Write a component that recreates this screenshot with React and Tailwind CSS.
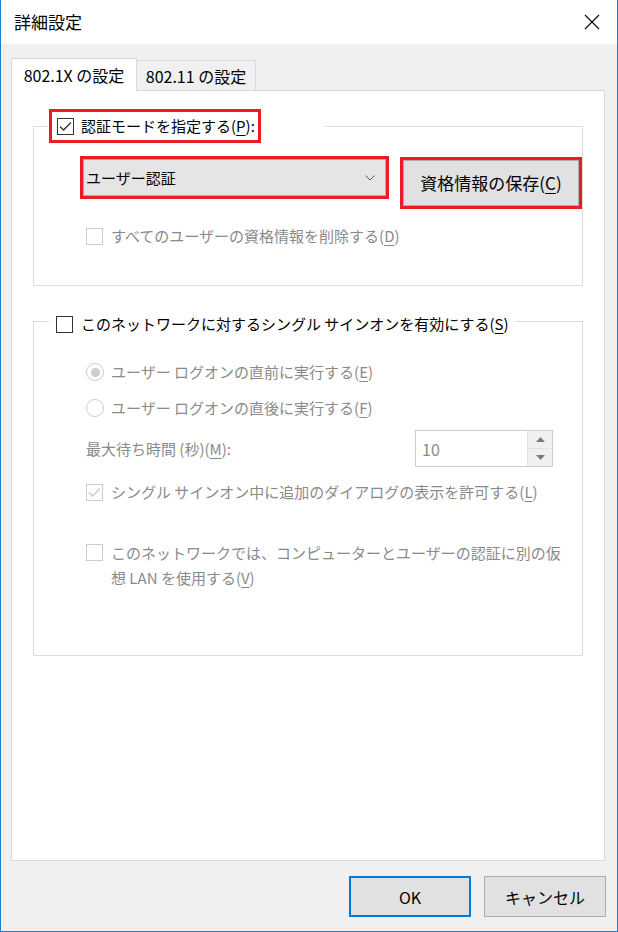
const DIS = "text-[#8a8a8a]";

function CheckBox({ checked, disabled }) {
  return (
    <span
      className={`w-[17px] h-[17px] shrink-0 border bg-white flex items-center justify-center ${
        disabled ? "border-[#cccccc]" : "border-[#333333]"
      }`}
    >
      {checked && (
        <svg width="13" height="11" viewBox="0 0 13 11" fill="none">
          <path d="M1 5.5L4.5 9L12 1.5" stroke={disabled ? "#c8c8c8" : "#333333"} strokeWidth="1.3" />
        </svg>
      )}
    </span>
  );
}

function Radio({ checked }) {
  return (
    <span className="w-[18px] h-[18px] shrink-0 rounded-full border border-[#cccccc] bg-white flex items-center justify-center">
      {checked && <span className="w-[9px] h-[9px] rounded-full bg-[#cccccc]" />}
    </span>
  );
}

const U = ({ children }) => <span className="underline underline-offset-[3px]">{children}</span>;

export default function App() {
  return (
    <div className="w-[618px] h-[932px] bg-[#f0f0f0] border-x border-b border-[#1b80d5] flex flex-col font-['Noto_Sans_CJK_JP',sans-serif] text-[15px] text-black">
      {/* title bar */}
      <div className="h-[44px] shrink-0 bg-white flex items-center justify-between pl-[13px] pr-[17px]">
        <span className="text-[17px] leading-[24px]">詳細設定</span>
        <svg width="16" height="16" viewBox="0 0 16 16" fill="none">
          <path d="M1 1L15 15M15 1L1 15" stroke="#000" strokeWidth="1.1" />
        </svg>
      </div>

      <div className="flex flex-col pl-[10px] pt-[14px]">
        {/* tabs */}
        <div className="flex items-end h-[32px] text-[16px]">
          <div className="w-[126px] h-[33px] -mb-px z-10 bg-white border border-b-0 border-[#d9d9d9] flex items-center justify-center leading-[24px]">
            802.1X の設定
          </div>
          <div className="w-[119px] h-[30px] bg-[#f0f0f0] border border-l-0 border-b-0 border-[#d9d9d9] flex items-center justify-center leading-[24px]">
            802.11 の設定
          </div>
        </div>

        {/* panel */}
        <div className="w-[594px] h-[771px] bg-white border border-[#d9d9d9] flex flex-col">
          {/* group 1 */}
          <fieldset className="ml-[21px] mt-[18px] w-[550px] min-w-0 border border-[#dcdcdc] pl-[15px] pb-[38px]">
            <legend className="w-[276px]">
              <div className="w-[212px] h-[34px] border-[3px] border-[#ec1c24] flex items-center pl-[5px] gap-[7px] leading-[24px]">
                <CheckBox checked />
                <span>
                  認証モードを指定する(<U>P</U>):
                </span>
              </div>
            </legend>

            <div className="flex items-start mt-[13px] ml-[31px]">
              <div className="w-[309px] h-[43px] border-[3px] border-[#ec1c24] flex">
                <div className="flex-1 bg-[#e5e5e5] border border-[#adadad] flex items-center justify-between pl-[2px] pr-[10px] leading-[24px]">
                  <span>ユーザー認証</span>
                  <svg width="10" height="6" viewBox="0 0 10 6" fill="none">
                    <path d="M0.5 0.5L5 5L9.5 0.5" stroke="#555" strokeWidth="1" />
                  </svg>
                </div>
              </div>
              <div className="ml-[11px] mt-[1px] w-[182px] h-[52px] border-[3px] border-[#ec1c24] flex">
                <div className="flex-1 bg-[#e1e1e1] border border-[#adadad] flex items-center justify-center text-[17px] leading-[24px]">
                  資格情報の保存(<U>C</U>)
                </div>
              </div>
            </div>

            <div className={`flex items-center gap-[8px] h-[22px] mt-[16px] ml-[37px] leading-[22px] ${DIS}`}>
              <CheckBox disabled />
              <span>
                すべてのユーザーの資格情報を削除する(<U>D</U>)
              </span>
            </div>
          </fieldset>

          {/* group 2 */}
          <fieldset className="ml-[21px] mt-[20px] w-[550px] min-w-0 border border-[#dcdcdc] pl-[15px] pb-[65px]">
            <legend className="w-[466px]">
              <div className="h-[30px] pt-[6px] pl-[7px] flex items-center gap-[8px] leading-[24px]">
                <CheckBox />
                <span className="whitespace-nowrap">
                  このネットワークに対するシングル サインオンを有効にする(<U>S</U>)
                </span>
              </div>
            </legend>

            <div className={`flex flex-col ml-[37px] ${DIS}`}>
              <div className="flex items-center gap-[7px] h-[24px] mt-[24px] leading-[24px]">
                <Radio checked />
                <span>
                  ユーザー ログオンの直前に実行する(<U>E</U>)
                </span>
              </div>
              <div className="flex items-center gap-[7px] h-[24px] mt-[12px] leading-[24px]">
                <Radio />
                <span>
                  ユーザー ログオンの直後に実行する(<U>F</U>)
                </span>
              </div>

              <div className="flex items-center h-[37px] mt-[10px]">
                <span className="w-[329px] leading-[24px]">
                  最大待ち時間 (秒)(<U>M</U>):
                </span>
                <div className="w-[138px] h-[37px] border border-[#cccccc] bg-white flex">
                  <div className="flex-1 flex items-center pl-[6px] text-[16px] leading-[24px]">10</div>
                  <div className="w-[25px] flex flex-col border-l border-[#e3e3e3]">
                    <div className="flex-1 bg-[#f0f0f0] border-b border-[#e3e3e3] flex items-center justify-center">
                      <svg width="9" height="5" viewBox="0 0 9 5">
                        <path d="M0 5L4.5 0L9 5Z" fill="#7a7a7a" />
                      </svg>
                    </div>
                    <div className="flex-1 bg-[#f0f0f0] flex items-center justify-center">
                      <svg width="9" height="5" viewBox="0 0 9 5">
                        <path d="M0 0L4.5 5L9 0Z" fill="#7a7a7a" />
                      </svg>
                    </div>
                  </div>
                </div>
              </div>

              <div className="flex items-center gap-[8px] h-[24px] mt-[13px] leading-[24px]">
                <CheckBox checked disabled />
                <span>
                  シングル サインオン中に追加のダイアログの表示を許可する(<U>L</U>)
                </span>
              </div>

              <div className="flex items-start gap-[8px] mt-[36px]">
                <span className="mt-[4px]">
                  <CheckBox disabled />
                </span>
                <span className="leading-[25px] whitespace-nowrap">
                  このネットワークでは、コンピューターとユーザーの認証に別の仮
                  <br />
                  想 LAN を使用する(<U>V</U>)
                </span>
              </div>
            </div>
          </fieldset>
        </div>
      </div>

      {/* footer buttons */}
      <div className="flex justify-end gap-[13px] pr-[11px] mt-[15px] text-[16px]">
        <button className="w-[122px] h-[41px] bg-[#e1e1e1] border-2 border-[#0078d7] leading-[24px]">OK</button>
        <button className="w-[122px] h-[41px] bg-[#e1e1e1] border border-[#adadad] leading-[24px]">キャンセル</button>
      </div>
    </div>
  );
}
